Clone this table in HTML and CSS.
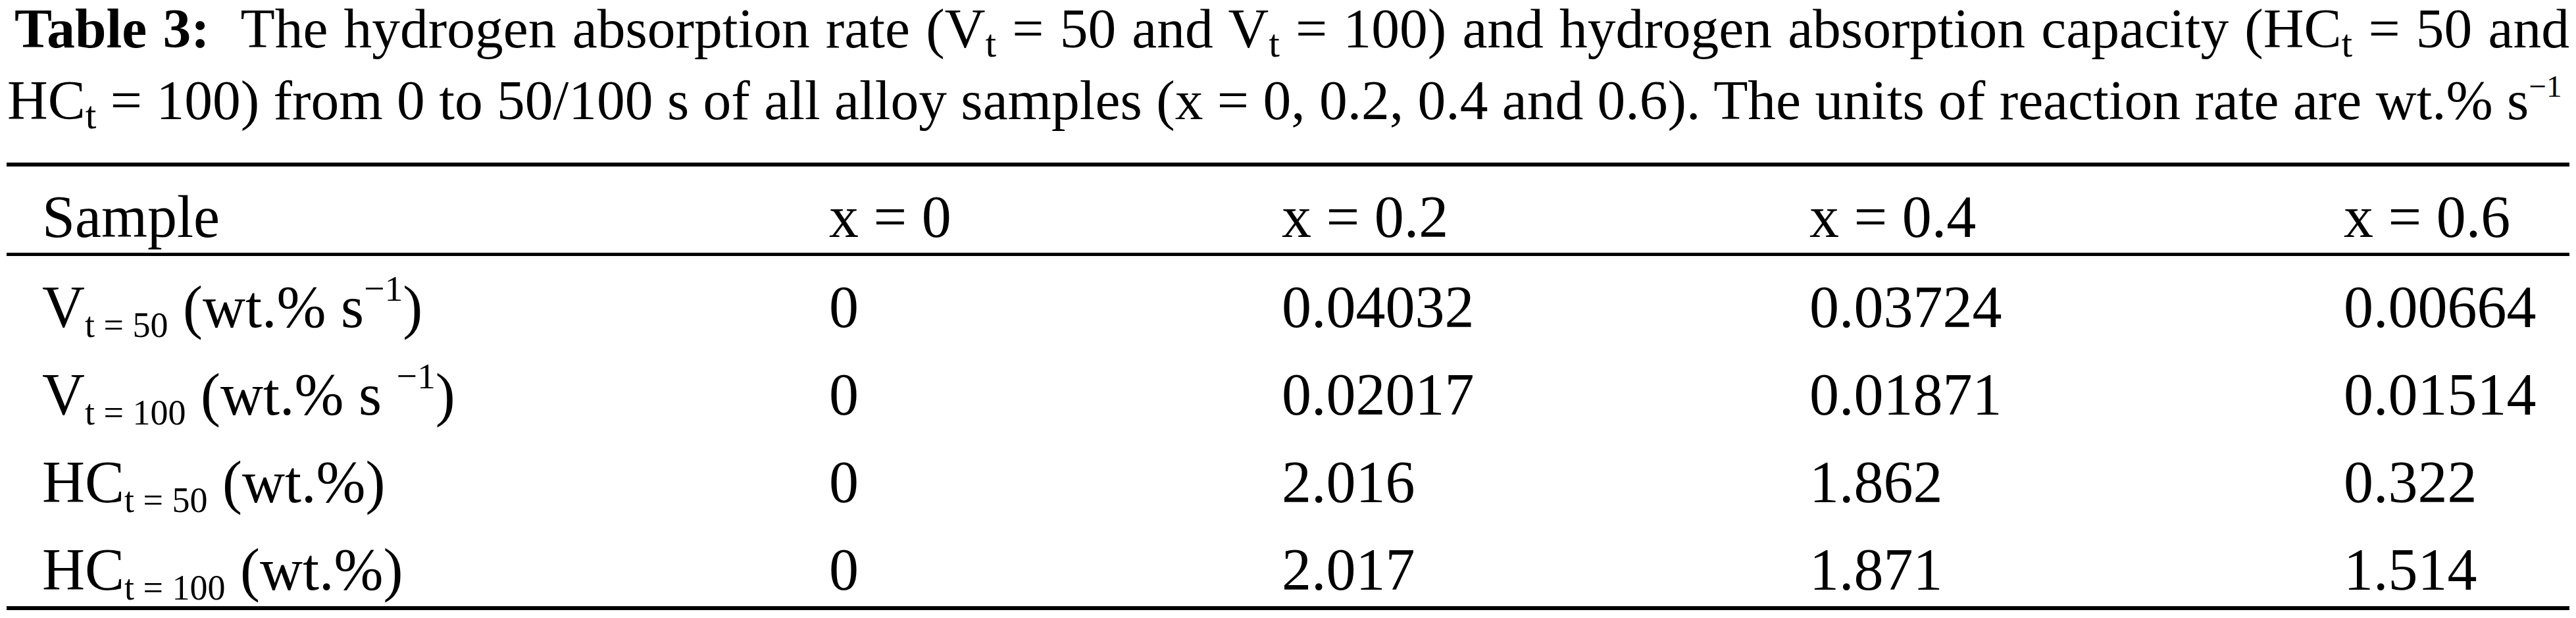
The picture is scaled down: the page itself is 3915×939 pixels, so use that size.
FILE: index.html
```html
<!DOCTYPE html>
<html lang="en">
<head>
    <meta charset="UTF-8">
    <meta name="viewport" content="width=device-width, initial-scale=1.0">
    <title>Table 3: Hydrogen absorption rate and capacity</title>
    <link rel="stylesheet" href="styles.css">
</head>
<body>
    <div class="table-wrap">
        <p class="caption">
            <span class="caption-line first"><b>Table 3:</b>&nbsp; The hydrogen absorption rate (V<span class="sub">t</span> = 50 and V<span class="sub">t</span> = 100) and hydrogen absorption capacity (HC<span class="sub">t</span> = 50 and</span>
            <span class="caption-line">HC<span class="sub">t</span> = 100) from 0 to 50/100 s of all alloy samples (x = 0, 0.2, 0.4 and 0.6). The units of reaction rate are wt.% s<span class="sup">&minus;1</span></span>
        </p>

        <table class="data-table">
            <colgroup>
                <col class="col-label">
                <col class="col-x0">
                <col class="col-x2">
                <col class="col-x4">
                <col class="col-x6">
            </colgroup>
            <thead>
                <tr>
                    <th class="label">Sample</th>
                    <th>x = 0</th>
                    <th>x = 0.2</th>
                    <th>x = 0.4</th>
                    <th>x = 0.6</th>
                </tr>
            </thead>
            <tbody>
                <tr>
                    <td class="label">V<span class="sub">t = 50</span> (wt.% s<span class="sup">&minus;1</span>)</td>
                    <td>0</td>
                    <td>0.04032</td>
                    <td>0.03724</td>
                    <td>0.00664</td>
                </tr>
                <tr>
                    <td class="label">V<span class="sub">t = 100</span> (wt.% s <span class="sup">&minus;1</span>)</td>
                    <td>0</td>
                    <td>0.02017</td>
                    <td>0.01871</td>
                    <td>0.01514</td>
                </tr>
                <tr>
                    <td class="label">HC<span class="sub">t = 50</span> (wt.%)</td>
                    <td>0</td>
                    <td>2.016</td>
                    <td>1.862</td>
                    <td>0.322</td>
                </tr>
                <tr>
                    <td class="label">HC<span class="sub">t = 100</span> (wt.%)</td>
                    <td>0</td>
                    <td>2.017</td>
                    <td>1.871</td>
                    <td>1.514</td>
                </tr>
            </tbody>
        </table>
    </div>
</body>
</html>
```

FILE: styles.css
```css
body {
    margin: 0;
    background-color: #ffffff;
    color: #000000;
    font-family: "Liberation Serif", "Times New Roman", serif;
}

.table-wrap {
    padding: 0 10px;
}

.caption {
    margin: -11px 0 40px;
    padding-left: 1px;
    font-size: 85.5px;
    line-height: 109px;
}

.caption-line {
    display: block;
    white-space: nowrap;
}

.caption-line.first {
    padding-left: 11px;
    white-space: normal;
    text-align: justify;
    text-align-last: justify;
}

.caption .sub {
    font-size: 0.7em;
    vertical-align: -0.24em;
    line-height: 0;
}

.caption .sup {
    font-size: 0.55em;
    vertical-align: 0.72em;
    line-height: 0;
}

.data-table {
    width: 100%;
    table-layout: fixed;
    border-collapse: separate;
    border-spacing: 0;
    border-top: 6px solid #000000;
    border-bottom: 6px solid #000000;
    font-size: 90px;
}

.col-label { width: 1250px; }
.col-x0 { width: 688px; }
.col-x2 { width: 802px; }
.col-x4 { width: 812px; }

.data-table th,
.data-table td {
    padding: 22px 0 0;
    text-align: left;
    white-space: nowrap;
}

.data-table th {
    font-weight: normal;
    line-height: 109px;
    border-bottom: 5px solid #000000;
}

.data-table td {
    line-height: 111px;
}

.data-table .label {
    padding-left: 54px;
}

.data-table .sub {
    font-size: 0.6em;
    vertical-align: -0.28em;
    line-height: 0;
}

.data-table .sup {
    font-size: 0.62em;
    vertical-align: 0.71em;
    line-height: 0;
}
```
